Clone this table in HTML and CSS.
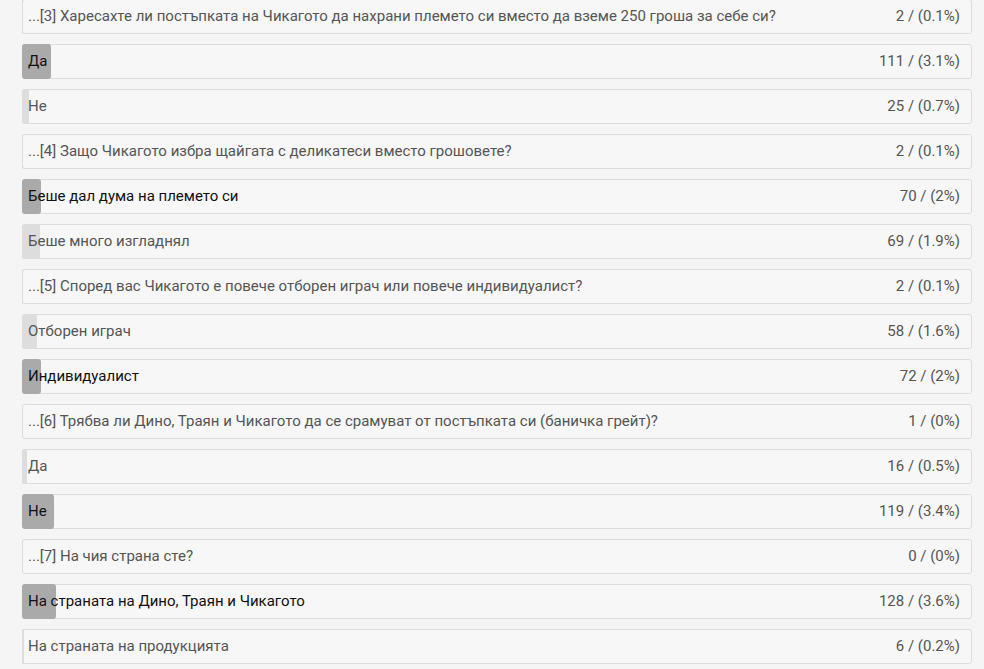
FILE: index.html
```html
<!DOCTYPE html>
<html lang="bg">
<head>
  <meta charset="UTF-8">
  <title>Резултати</title>
  <link rel="stylesheet" href="styles.css">
</head>
<body>
  <div class="results">
    <div class="row question"><span class="bar" style="width: 0.1%"></span><span class="label">...[3] Харесахте ли постъпката на Чикагото да нахрани племето си вместо да вземе 250 гроша за себе си?</span><span class="count">2 / (0.1%)</span></div>
    <div class="row top"><span class="bar" style="width: 3.1%"></span><span class="label">Да</span><span class="count">111 / (3.1%)</span></div>
    <div class="row"><span class="bar" style="width: 0.7%"></span><span class="label">Не</span><span class="count">25 / (0.7%)</span></div>

    <div class="row question"><span class="bar" style="width: 0.1%"></span><span class="label">...[4] Защо Чикагото избра щайгата с деликатеси вместо грошовете?</span><span class="count">2 / (0.1%)</span></div>
    <div class="row top"><span class="bar" style="width: 2%"></span><span class="label">Беше дал дума на племето си</span><span class="count">70 / (2%)</span></div>
    <div class="row"><span class="bar" style="width: 1.9%"></span><span class="label">Беше много изгладнял</span><span class="count">69 / (1.9%)</span></div>

    <div class="row question"><span class="bar" style="width: 0.1%"></span><span class="label">...[5] Според вас Чикагото е повече отборен играч или повече индивидуалист?</span><span class="count">2 / (0.1%)</span></div>
    <div class="row"><span class="bar" style="width: 1.6%"></span><span class="label">Отборен играч</span><span class="count">58 / (1.6%)</span></div>
    <div class="row top"><span class="bar" style="width: 2%"></span><span class="label">Индивидуалист</span><span class="count">72 / (2%)</span></div>

    <div class="row question"><span class="bar" style="width: 0%"></span><span class="label">...[6] Трябва ли Дино, Траян и Чикагото да се срамуват от постъпката си (баничка грейт)?</span><span class="count">1 / (0%)</span></div>
    <div class="row"><span class="bar" style="width: 0.5%"></span><span class="label">Да</span><span class="count">16 / (0.5%)</span></div>
    <div class="row top"><span class="bar" style="width: 3.4%"></span><span class="label">Не</span><span class="count">119 / (3.4%)</span></div>

    <div class="row question"><span class="bar" style="width: 0%"></span><span class="label">...[7] На чия страна сте?</span><span class="count">0 / (0%)</span></div>
    <div class="row top"><span class="bar" style="width: 3.6%"></span><span class="label">На страната на Дино, Траян и Чикагото</span><span class="count">128 / (3.6%)</span></div>
    <div class="row"><span class="bar" style="width: 0.2%"></span><span class="label">На страната на продукцията</span><span class="count">6 / (0.2%)</span></div>
  </div>
</body>
</html>
```

FILE: styles.css
```css
body {
  margin: 0;
  background-color: #f5f5f5;
  font-family: Roboto, "Liberation Sans", Arial, sans-serif;
  font-size: 15px;
  line-height: 21px;
  color: #555555;
}
.results {
  width: 950px;
  margin: -1px 0 0 22px;
  display: flex;
  flex-direction: column;
  gap: 10px;
}
.row {
  position: relative;
  display: flex;
  justify-content: space-between;
  padding: 6px 11px 6px 5px;
  background-color: #f7f7f7;
  border: 1px solid #dcdcdc;
  border-radius: 3px;
}
.bar {
  position: absolute;
  top: -1px;
  left: -1px;
  bottom: -1px;
  background-color: #dddddd;
  border-radius: 3px;
}
.row.top .bar {
  background-color: #aaaaaa;
}
.row.top .label {
  color: #111111;
}
.label,
.count {
  position: relative;
  white-space: nowrap;
}
```
